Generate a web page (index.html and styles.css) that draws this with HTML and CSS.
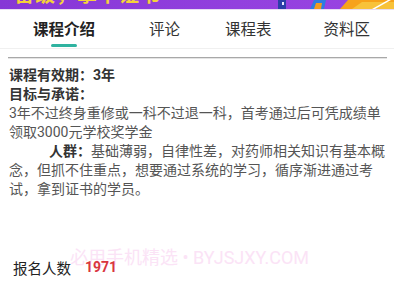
FILE: index.html
```html
<!DOCTYPE html>
<html lang="zh">
<head>
<meta charset="utf-8">
<title>课程介绍</title>
<link rel="stylesheet" href="styles.css">
</head>
<body>
<div class="page">
  <div class="banner">
    <span class="banner-text">留级，拿下证书</span>
    <svg class="banner-art" width="120" height="9" viewBox="0 0 120 9">
      <rect x="4" y="0" width="8" height="9" fill="#2b3fa8"/>
      <rect x="8" y="2" width="2" height="3" fill="#e8e8ff"/>
      <path d="M36 9 L40 0 L52 0 L50 9 Z" fill="#2f7be0"/>
      <path d="M40 9 L42 3 L48 3 L47 9 Z" fill="#f39a1e"/>
      <path d="M66 9 L74 0 L120 0 L120 9 Z" fill="#f7a21a"/>
      <path d="M78 9 L88 2 L120 2 L120 9 Z" fill="#f8c23a"/>
      <path d="M98 9 L114 0 L117 0 L101 9 Z" fill="#ffffff"/>
    </svg>
  </div>

  <nav class="tabs">
    <div class="tab tab-active">课程介绍<span class="tab-line"></span></div>
    <div class="tab tab-2">评论</div>
    <div class="tab tab-3">课程表</div>
    <div class="tab tab-4">资料区</div>
  </nav>

  <main class="content">
    <hr class="rule">
    <p class="line strong">课程有效期：3年</p>
    <p class="line strong">目标与承诺：</p>
    <p class="line">3年不过终身重修或一科不过退一科，首考通过后可凭成绩单领取3000元学校奖学金</p>
    <p class="line indent"><b class="label">人群：</b>基础薄弱，自律性差，对药师相关知识有基本概念，但抓不住重点，想要通过系统的学习，循序渐进通过考试，拿到证书的学员。</p>

    <div class="signup">
      <span class="signup-label">报名人数</span>
      <span class="signup-num">1971</span>
    </div>
  </main>

  <div class="watermark">必用手机精选 • BYJSJXY.COM</div>
</div>
</body>
</html>
```

FILE: styles.css
```css
html, body {
  margin: 0;
  padding: 0;
  background: #ffffff;
}

body {
  font-family: Roboto, "Noto Sans CJK SC", sans-serif;
  color: #333333;
  overflow: hidden;
}

.page {
  position: relative;
  width: 394px;
  height: 281px;
  overflow: hidden;
}

.banner {
  position: relative;
  height: 9px;
  background: linear-gradient(90deg, #8636d6 0%, #9240de 60%, #9a44e2 100%);
  overflow: hidden;
  border-bottom: 1px solid #e7dcf3;
}

.banner-text {
  position: absolute;
  left: 14px;
  top: -18px;
  font-size: 20px;
  font-weight: 700;
  line-height: 26px;
  color: #f4d23a;
  letter-spacing: 1px;
}

.banner-art {
  position: absolute;
  right: 0;
  top: 0;
}

.tabs {
  display: flex;
  height: 38px;
  align-items: center;
  padding-left: 33px;
  border-bottom: 1px solid #f0f0f0;
  font-family: "Noto Sans CJK SC", sans-serif;
}

.tab {
  position: relative;
  font-size: 15.5px;
  line-height: 20px;
  color: #333333;
  margin-top: -2px;
}

.tab-active {
  font-weight: 700;
  color: #222222;
}

.tab-line {
  position: absolute;
  left: 18px;
  top: 26px;
  width: 26px;
  height: 3px;
  border-radius: 2px;
  background: #2fb3a0;
}

.tab-2 { margin-left: 54px; }
.tab-3 { margin-left: 45px; }
.tab-4 { margin-left: 52px; }

.content {
  position: relative;
  z-index: 1;
  padding: 0 8px 0 9px;
  width: 377px;
}

.rule {
  margin: 8px 0 7px -1px;
  width: 379px;
  border: 0;
  border-top: 1px solid #a8a8a8;
  border-bottom: 1px solid #e4e4e4;
  height: 0;
}

.line {
  margin: 0;
  font-size: 14px;
  line-height: 19px;
  color: #555555;
}

.strong {
  font-weight: 700;
  color: #333333;
}

.indent {
  text-indent: 40px;
}

.label {
  font-weight: 700;
  color: #333333;
}

.signup {
  display: flex;
  align-items: center;
  margin-top: 58px;
  padding-left: 4px;
  height: 20px;
}

.signup-label {
  font-family: "Noto Sans CJK SC", sans-serif;
  font-size: 14.5px;
  color: #222222;
}

.signup-num {
  margin-left: 14px;
  font-size: 14px;
  font-weight: 700;
  color: #d9363e;
}

.watermark {
  position: absolute;
  z-index: 0;
  left: 70px;
  top: 247px;
  font-size: 18px;
  line-height: 22px;
  color: #fbe3f6;
  white-space: nowrap;
  pointer-events: none;
}
```
